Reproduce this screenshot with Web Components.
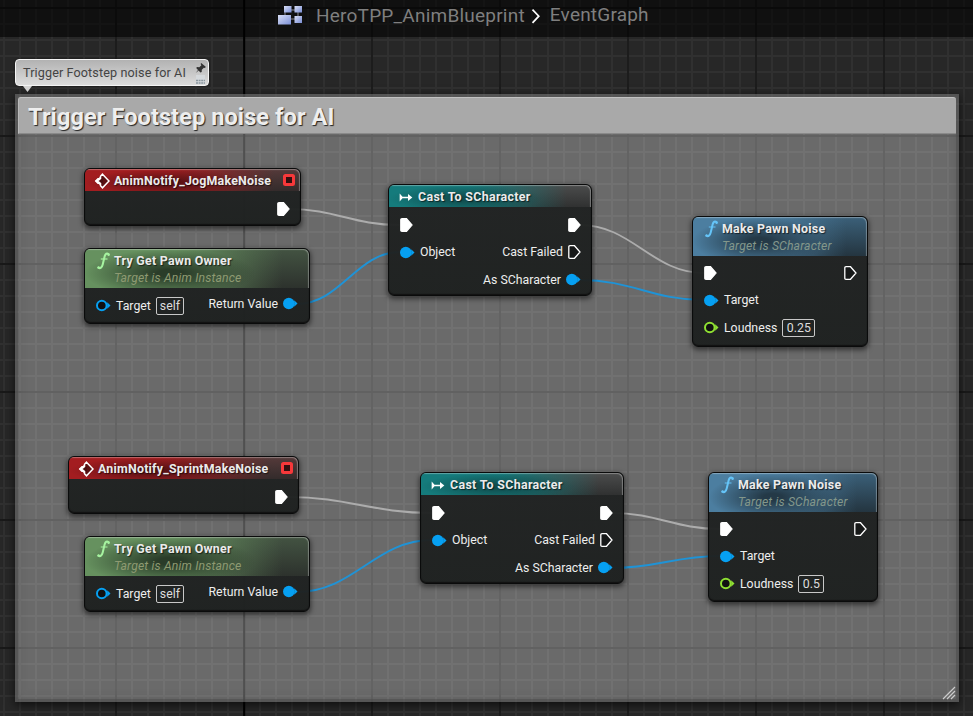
<!DOCTYPE html>
<html lang="en"><head><meta charset="utf-8"><title>EventGraph</title>
<style>html,body{margin:0;background:#272727;overflow:hidden}body{font-family:Roboto,"Liberation Sans",sans-serif}</style></head>
<body>
<bp-graph>
  <bp-breadcrumb slot="bar"><span>HeroTPP_AnimBlueprint</span><span slot="leaf">EventGraph</span></bp-breadcrumb>
  <bp-comment style="left:15px;top:94px;width:944px;height:608px">Trigger Footstep noise for AI</bp-comment>
  <bp-bubble style="left:15px;top:59px">Trigger Footstep noise for AI</bp-bubble>
  <bp-wires></bp-wires>

  <bp-node kind="event" style="left:84px;top:168px;width:217px;height:58px"><span slot="title">AnimNotify_JogMakeNoise</span>
    <bp-pin slot="out" type="exec" linked></bp-pin></bp-node>
  <bp-node kind="pure" style="left:84px;top:248px;width:226px;height:76px"><span slot="title">Try Get Pawn Owner</span><span slot="sub">Target is Anim Instance</span>
    <bp-pin slot="in" type="object" value="self">Target</bp-pin><bp-pin slot="out" type="object" linked>Return Value</bp-pin></bp-node>
  <bp-node kind="cast" style="left:388px;top:184px;width:204px;height:112px"><span slot="title">Cast To SCharacter</span>
    <bp-pin slot="in" type="exec" linked></bp-pin><bp-pin slot="in" type="object" linked>Object</bp-pin>
    <bp-pin slot="out" type="exec" linked></bp-pin><bp-pin slot="out" type="exec">Cast Failed</bp-pin><bp-pin slot="out" type="object" linked>As SCharacter</bp-pin></bp-node>
  <bp-node kind="func" style="left:692px;top:216px;width:176px;height:131px"><span slot="title">Make Pawn Noise</span><span slot="sub">Target is SCharacter</span>
    <bp-pin slot="in" type="exec" linked></bp-pin><bp-pin slot="in" type="object" linked>Target</bp-pin><bp-pin slot="in" type="float" value="0.25">Loudness</bp-pin>
    <bp-pin slot="out" type="exec"></bp-pin></bp-node>

  <bp-node kind="event" style="left:68px;top:456px;width:231px;height:58px"><span slot="title">AnimNotify_SprintMakeNoise</span>
    <bp-pin slot="out" type="exec" linked></bp-pin></bp-node>
  <bp-node kind="pure" style="left:84px;top:536px;width:226px;height:76px"><span slot="title">Try Get Pawn Owner</span><span slot="sub">Target is Anim Instance</span>
    <bp-pin slot="in" type="object" value="self">Target</bp-pin><bp-pin slot="out" type="object" linked>Return Value</bp-pin></bp-node>
  <bp-node kind="cast" style="left:420px;top:472px;width:204px;height:112px"><span slot="title">Cast To SCharacter</span>
    <bp-pin slot="in" type="exec" linked></bp-pin><bp-pin slot="in" type="object" linked>Object</bp-pin>
    <bp-pin slot="out" type="exec" linked></bp-pin><bp-pin slot="out" type="exec">Cast Failed</bp-pin><bp-pin slot="out" type="object" linked>As SCharacter</bp-pin></bp-node>
  <bp-node kind="func" style="left:708px;top:472px;width:170px;height:130px"><span slot="title">Make Pawn Noise</span><span slot="sub">Target is SCharacter</span>
    <bp-pin slot="in" type="exec" linked></bp-pin><bp-pin slot="in" type="object" linked>Target</bp-pin><bp-pin slot="in" type="float" value="0.5">Loudness</bp-pin>
    <bp-pin slot="out" type="exec"></bp-pin></bp-node>
</bp-graph>
<script>
function define(name, html) {
  customElements.define(name, class extends HTMLElement {
    constructor() {
      super();
      this.attachShadow({mode: 'open'});
    }
    connectedCallback() {
      this.shadowRoot.innerHTML = typeof html === 'function' ? html(this) : html;
    }
  });
}

/* Canvas: 16px minor grid, 128px major grid, one black axis line */
define('bp-graph', `<style>
:host{display:block;position:relative;width:973px;height:716px;overflow:hidden;background:#272727}
.grid{position:absolute;inset:0}
</style>
<svg class="grid" width="973" height="716"><defs>
<pattern id="m" width="16" height="16" patternUnits="userSpaceOnUse" x="3" y="7"><path d="M1 0V16M0 1H16" stroke="#303030" stroke-width="2"/></pattern>
<pattern id="M" width="128" height="128" patternUnits="userSpaceOnUse" x="115" y="7"><path d="M1 0V128M0 1H128" stroke="#191919" stroke-width="1.800"/></pattern></defs>
<rect width="973" height="716" fill="url(#m)"/><rect width="973" height="716" fill="url(#M)"/><path d="M244.200 0V716" stroke="#000" stroke-width="2"/></svg>
<slot name="bar"></slot><slot></slot>`);

define('bp-breadcrumb', `<style>
:host{display:flex;position:relative;height:37px;background:rgba(0,0,0,.58);color:#7f7f7f;font-size:19px;line-height:20px;box-sizing:border-box;padding:5px 0 0 278px;align-items:flex-start}
.a{margin-left:13px;letter-spacing:.22px;padding-top:1px}.b{margin-left:9px;letter-spacing:.2px}.c{margin:4px 0 0 6px}
</style>
<svg width="25" height="20" viewBox="0 0 25 20"><defs><linearGradient id="g" x2="1" y2="1"><stop stop-color="#d9dff5"/><stop offset="1" stop-color="#7b8fd6"/></linearGradient></defs>
<path d="M12 5H20M20 5V14M7 12V6H12M12 14H20" stroke="#8a8a95" fill="none"/>
<rect x="6" y="1" width="7.500" height="6.500" fill="url(#g)"/><rect x="16.500" y="1" width="7.500" height="6.500" fill="url(#g)"/><rect x="0" y="10" width="13" height="9.500" fill="url(#g)"/><rect x="16.500" y="11" width="7.500" height="7" fill="url(#g)"/></svg>
<div class="a"><slot></slot></div>
<svg class="c" width="10" height="15" viewBox="0 0 10 15"><path d="M1.500 .7L7.800 7.200L1.500 13.800" fill="none" stroke="#fff" stroke-width="1.700"/></svg>
<div class="b"><slot name="leaf"></slot></div>`);

define('bp-comment', `<style>
:host{display:flex;flex-direction:column;position:absolute;box-sizing:border-box;padding:3px;background:rgba(255,255,255,.315);box-shadow:0 3px 9px rgba(0,0,0,.65),inset 0 0 0 3px rgba(70,70,70,.4),inset 0 0 12px rgba(50,50,50,.38)}
.t{height:37px;box-sizing:border-box;background:#a9a9a9;border-top:1px solid #c2c2c2;border-left:1px solid #bbb;border-bottom:1px solid #8a8a8a;border-radius:3px 3px 0 0;padding-left:9px;font:bold 23.500px/39px Roboto,sans-serif;letter-spacing:.1px;color:#eee;text-shadow:1px 1px 1px #222;white-space:nowrap}
svg{margin:auto -2px -1px auto}
</style><div class="t"><slot></slot></div>
<svg width="16" height="14" viewBox="0 0 16 14"><path d="M1 13L13 1M5 13L13 5M9 13L13 9" stroke="#ccc" stroke-width="1.200"/></svg>`);

define('bp-bubble', `<style>
:host{display:flex;position:absolute;box-sizing:border-box;width:194px;height:27px;border:1px solid #f4f4f4;border-radius:4px;background:linear-gradient(#b2b2b2,#dcdcdc);color:#444;font-size:12.600px;letter-spacing:.12px;line-height:25px;padding-left:7px;white-space:nowrap;box-shadow:0 0 2px #0008}
.s{position:absolute;right:1px;top:2px}.p{position:absolute;left:7px;top:26px}
</style><slot></slot>
<svg class="s" width="12" height="23" viewBox="0 0 12 23"><path d="M6.200 1L11 5L9.600 6L8.800 5.700L6.800 7.700L6.700 10L5.400 10.500L3.600 8.600L.8 11L3 7.900L1.200 6L2 5.100L4.300 5.200L6.400 3.300L5.600 2Z" fill="#333"/><rect x="1" y="13" width="9" height="9" fill="#d5d9dc"/><path d="M1 18.500H10M1 21H10" stroke="#8b979e" stroke-width="1.300" stroke-dasharray="2 .6"/></svg>
<svg class="p" width="10" height="6"><path d="M0 0H9L4.500 6Z" fill="#d4d4d4"/></svg>`);

/* Splines join pin to pin with horizontal tangents */
const wires = [[289,209,399,225,0],[580,225,704,273,0],[297,304,400,252,1],[580,280,704,300,1],[288,497,432,513,0],[297,592,432,540,1],[612,513,720,529,0],[612,568,720,556,1]];
define('bp-wires', `<style>:host{position:absolute;left:0;top:0;display:block}svg{display:block}</style>
<svg width="973" height="716" fill="none" stroke-linecap="round">${wires.map(([a,b,c,d,k]) => {
  const t = (c - a) * .42;
  return `<path d="M${a} ${b}C${a+t} ${b} ${c-t} ${d} ${c} ${d}" stroke="${k ? '#1f93d6' : '#acacac'}" stroke-width="1.900"/>`;
}).join('')}</svg>`);

const glyph = {
  event: '<svg width="16" height="16" viewBox="0 0 16 16"><path d="M8.500 1.200L15 8L8.500 14.800L6.500 12.700V10.200H4L1.800 8L4 5.800H6.500V3.300Z" fill="#5a1012" stroke="#fff" stroke-width="1.500"/><path d="M1 8L6.500 3.500V12.500Z" fill="#fff"/><path d="M4.500 8L9 5V11Z" fill="#4a0e10"/></svg>',
  cast: '<svg width="14" height="9" viewBox="0 0 14 9"><path d="M1.300 2.200L3.300 4.500L1.300 6.800ZM2 4.500H11" fill="#fff" stroke="#fff" stroke-width="1.300"/><path d="M9 .9L13.300 4.500L9 8.100Z" fill="#fff"/></svg>'
};
glyph.pure = glyph.func = '<svg width="15" height="18" viewBox="0 0 15 18"><path d="M12.600 2.300C11 .8 9.300 1.600 8.600 4.500L6.700 12.500C6 15.600 4.200 16.800 2.400 15.700" fill="none" stroke="currentColor" stroke-width="2" stroke-linecap="round"/><circle cx="12.600" cy="2.800" r="1.200" fill="currentColor"/><circle cx="2.600" cy="15.400" r="1.200" fill="currentColor"/><path d="M4.800 7H11.500" stroke="currentColor" stroke-width="1.200"/></svg>';

define('bp-node', el => `<style>
:host{position:absolute;display:flex;flex-direction:column;box-sizing:border-box;border:1.500px solid #0a0b0b;border-radius:6px;background:linear-gradient(rgba(33,35,35,.97),rgba(30,33,32,.97));box-shadow:0 2px 5px 1px rgba(0,0,0,.5),inset 0 -1px 1px #111;overflow:hidden;--h:22px}
:host([kind=event]){--c:#a31d20;--d:#5a1215;--e:#553a3a;--f:#332b2b}
:host([kind=cast]){--c:#157b7c;--d:#114e4f;--e:#4b4c4c;--f:#303131}
:host([kind=pure]){--c:#66915f;--d:#2a3c29;--e:#435342;--f:#2d322d;--h:39px;--g:#a6f3a0}
:host([kind=func]){--c:#4c7ea0;--d:#243947;--e:#3b6079;--f:#243540;--h:39px;--g:#65c4f8}
header{height:var(--h);flex:none;position:relative;box-sizing:border-box;display:flex;
box-shadow:inset -1px 1px 1px rgba(255,255,255,.33);border-radius:4px 5px 0 0;
background:radial-gradient(ellipse 38% 62% at 38% 62%,var(--d) 15%,transparent),linear-gradient(90deg,var(--c) 40%,transparent 88%),linear-gradient(var(--e),var(--f))}
i{display:flex;justify-content:flex-start;width:20px;padding-left:9px;flex:none;color:var(--g)}
:host([kind=event]) i svg{margin-top:4px}
:host([kind=cast]) i svg{margin:8px 0 0 1px}
:host([kind=pure]) i,:host([kind=func]) i{padding-left:11px;width:18px}
:host([kind=pure]) i svg,:host([kind=func]) i svg{margin-top:3px}
.x{padding-top:4px;font:bold 12.400px/16px Roboto,sans-serif;letter-spacing:.26px;color:#ebebeb;white-space:nowrap;text-shadow:1px 1px 1px #0009}
.s{font:italic 12.200px/18px Roboto,sans-serif;letter-spacing:.15px;color:#8e9a72;text-shadow:none}
:host([kind=cast]) .x{letter-spacing:.32px}
:host([kind=event]) .x{letter-spacing:.22px}
:host([kind=func]) .s{color:#83978b}
b{margin:5px 5px 0 auto;width:6px;height:6px;border:3px solid #f8383a;background:#350f10;border-radius:2.500px}
main{display:flex;justify-content:space-between;padding:4px 10px 0 11px;align-items:flex-start}
:host([kind=func]) main{padding-top:3px}
:host([kind=pure]) main{padding-right:11px}
main div{display:flex;flex-direction:column}
.o{align-items:flex-end}
:host([kind=pure]) .o{margin-top:-2px}
</style><header><i>${glyph[el.getAttribute('kind')]}</i><div class="x"><slot name="title"></slot><div class="s"><slot name="sub"></slot></div></div>${el.getAttribute('kind') === 'event' ? '<b></b>' : ''}</header>
<main><div class="i"><slot name="in"></slot></div><div class="o"><slot name="out"></slot></div></main>`);

define('bp-pin', el => {
  const type = el.getAttribute('type'), on = el.hasAttribute('linked'), v = el.getAttribute('value');
  const col = type === 'float' ? '#8fe032' : '#06a0f2';
  const icon = type === 'exec'
    ? `<svg width="13" height="14" viewBox="0 0 13 14"><path d="M.8 1.800Q.8 .7 2 .7H6.500L12 7L6.500 13.300H2Q.8 13.300 .8 12.200Z" fill="${on ? '#fff' : '#161818'}" stroke="#fff" stroke-width="1.300"/></svg>`
    : `<svg width="15" height="13" viewBox="0 0 15 13"><circle cx="5.800" cy="6.500" r="${on ? 5.8 : 4.8}" fill="${on ? col : '#111'}" stroke="${col}" stroke-width="${on ? 0 : 2}"/><path d="M11.200 3.200L14.500 6.500L11.200 9.800Z" fill="${col}"/></svg>`;
  return `<style>
:host{display:flex;align-items:center;height:27.500px;font:12.300px/16px Roboto,sans-serif;color:#eee;white-space:nowrap;gap:5px}
:host([slot=out]){flex-direction:row-reverse}
svg{flex:none}
em{font-style:normal;border:1px solid #c8c8c8;border-radius:2px;height:16px;line-height:16px;padding:0 3.500px;color:#ddd}
:host([type=object]) em{padding:0 3px}
</style>${icon}<span><slot></slot></span>${v ? `<em>${v}</em>` : ''}`;
});
</script></body></html>
